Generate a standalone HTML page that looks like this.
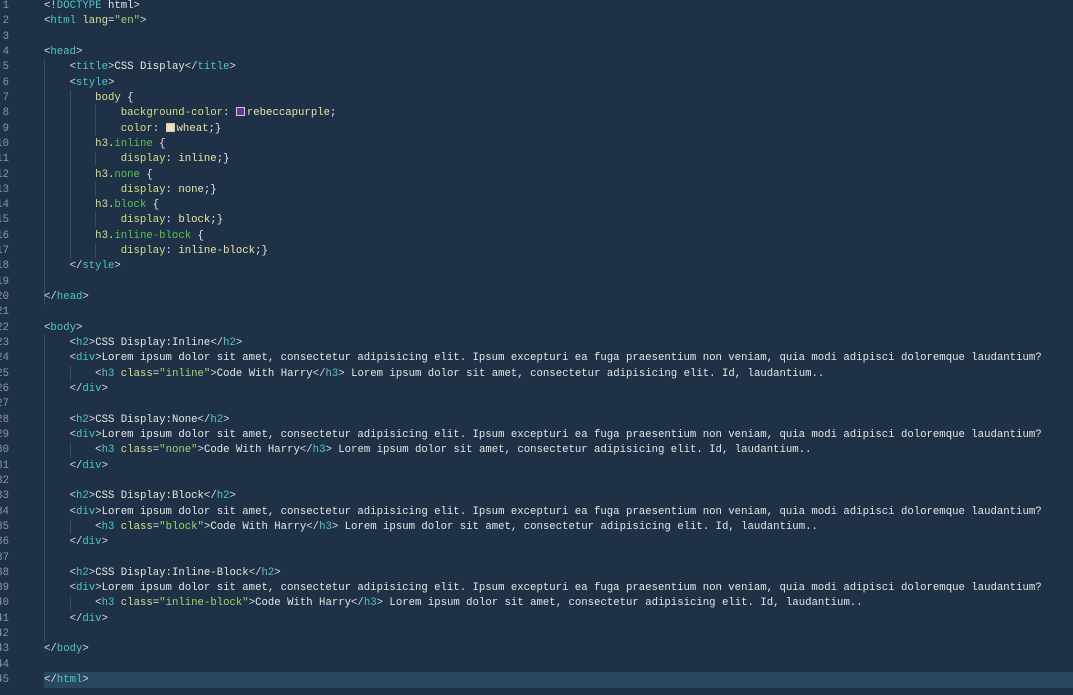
<!DOCTYPE html>
<html><head><style>
body{margin:0;width:1073px;height:695px;background:#1e3146;overflow:hidden;font-family:"Liberation Mono",monospace;font-size:10.67px;color:#e6e6e6}
.l{position:absolute;left:0;height:15.32px;line-height:15.32px;width:1073px;white-space:pre}
.n{position:absolute;left:-4px;width:13px;text-align:right;color:#8a96a3;overflow:hidden}
.c{position:absolute;left:44px}
.t{color:#4fc6c6}.b{color:#d8d8d8}.s{color:#9fd46c}.p{color:#d7df86}.v{color:#ece3a6}.k{color:#58c454}
.g{position:absolute;width:1px;background:#3a4d62}
.hl{position:absolute;left:44px;top:672px;width:1029px;height:16px;background:#29475f}
.sw{display:inline-block;width:9px;height:9px;vertical-align:-1px;margin-right:2px;border:1px solid #ccc;box-sizing:border-box}
</style></head><body>
<div class="hl"></div>
<div class="g" style="left:44px;top:60px;height:245px"></div>
<div class="g" style="left:70px;top:90px;height:170px"></div>
<div class="g" style="left:95px;top:105px;height:30px"></div>
<div class="g" style="left:95px;top:151px;height:15px"></div>
<div class="g" style="left:95px;top:182px;height:15px"></div>
<div class="g" style="left:95px;top:212px;height:15px"></div>
<div class="g" style="left:95px;top:243px;height:15px"></div>
<div class="g" style="left:44px;top:335px;height:307px"></div>
<div class="g" style="left:70px;top:366px;height:15px"></div>
<div class="g" style="left:70px;top:443px;height:15px"></div>
<div class="g" style="left:70px;top:519px;height:15px"></div>
<div class="g" style="left:70px;top:596px;height:15px"></div>
<script>
const L=[
'<span class="b">&lt;!</span><span class="t">DOCTYPE</span> html<span class="b">&gt;</span>',
'<span class="b">&lt;</span><span class="t">html</span> <span class="p">lang</span>=<span class="s">"en"</span><span class="b">&gt;</span>',
'',
'<span class="b">&lt;</span><span class="t">head</span><span class="b">&gt;</span>',
'    <span class="b">&lt;</span><span class="t">title</span><span class="b">&gt;</span>CSS Display<span class="b">&lt;/</span><span class="t">title</span><span class="b">&gt;</span>',
'    <span class="b">&lt;</span><span class="t">style</span><span class="b">&gt;</span>',
'        <span class="p">body</span> {',
'            <span class="p">background-color</span>: <span class="sw" style="background:#663399"></span><span class="v">rebeccapurple</span>;',
'            <span class="p">color</span>: <span class="sw" style="background:#f5deb3"></span><span class="v">wheat</span>;}',
'        <span class="p">h3</span>.<span class="k">inline</span> {',
'            <span class="p">display</span>: <span class="v">inline</span>;}',
'        <span class="p">h3</span>.<span class="k">none</span> {',
'            <span class="p">display</span>: <span class="v">none</span>;}',
'        <span class="p">h3</span>.<span class="k">block</span> {',
'            <span class="p">display</span>: <span class="v">block</span>;}',
'        <span class="p">h3</span>.<span class="k">inline-block</span> {',
'            <span class="p">display</span>: <span class="v">inline-block</span>;}',
'    <span class="b">&lt;/</span><span class="t">style</span><span class="b">&gt;</span>',
'',
'<span class="b">&lt;/</span><span class="t">head</span><span class="b">&gt;</span>',
'',
'<span class="b">&lt;</span><span class="t">body</span><span class="b">&gt;</span>'];
const sec=[['Inline','inline'],['None','none'],['Block','block'],['Inline-Block','inline-block']];
sec.forEach((s,i)=>{
L.push('    <span class="b">&lt;</span><span class="t">h2</span><span class="b">&gt;</span>CSS Display:'+s[0]+'<span class="b">&lt;/</span><span class="t">h2</span><span class="b">&gt;</span>');
L.push('    <span class="b">&lt;</span><span class="t">div</span><span class="b">&gt;</span>Lorem ipsum dolor sit amet, consectetur adipisicing elit. Ipsum excepturi ea fuga praesentium non veniam, quia modi adipisci doloremque laudantium?');
L.push('        <span class="b">&lt;</span><span class="t">h3</span> <span class="p">class</span>=<span class="s">"'+s[1]+'"</span><span class="b">&gt;</span>Code With Harry<span class="b">&lt;/</span><span class="t">h3</span><span class="b">&gt;</span> Lorem ipsum dolor sit amet, consectetur adipisicing elit. Id, laudantium..');
L.push('    <span class="b">&lt;/</span><span class="t">div</span><span class="b">&gt;</span>');
L.push('');
});
L.pop();
L.push('','<span class="b">&lt;/</span><span class="t">body</span><span class="b">&gt;</span>','','<span class="b">&lt;/</span><span class="t">html</span><span class="b">&gt;</span>');
let h='';
L.forEach((x,i)=>{h+='<div class="l" style="top:'+(-1+i*15.32)+'px"><span class="n">'+(i+1)+'</span><span class="c">'+x+'</span></div>';});
document.write(h);
</script>
</body></html>
